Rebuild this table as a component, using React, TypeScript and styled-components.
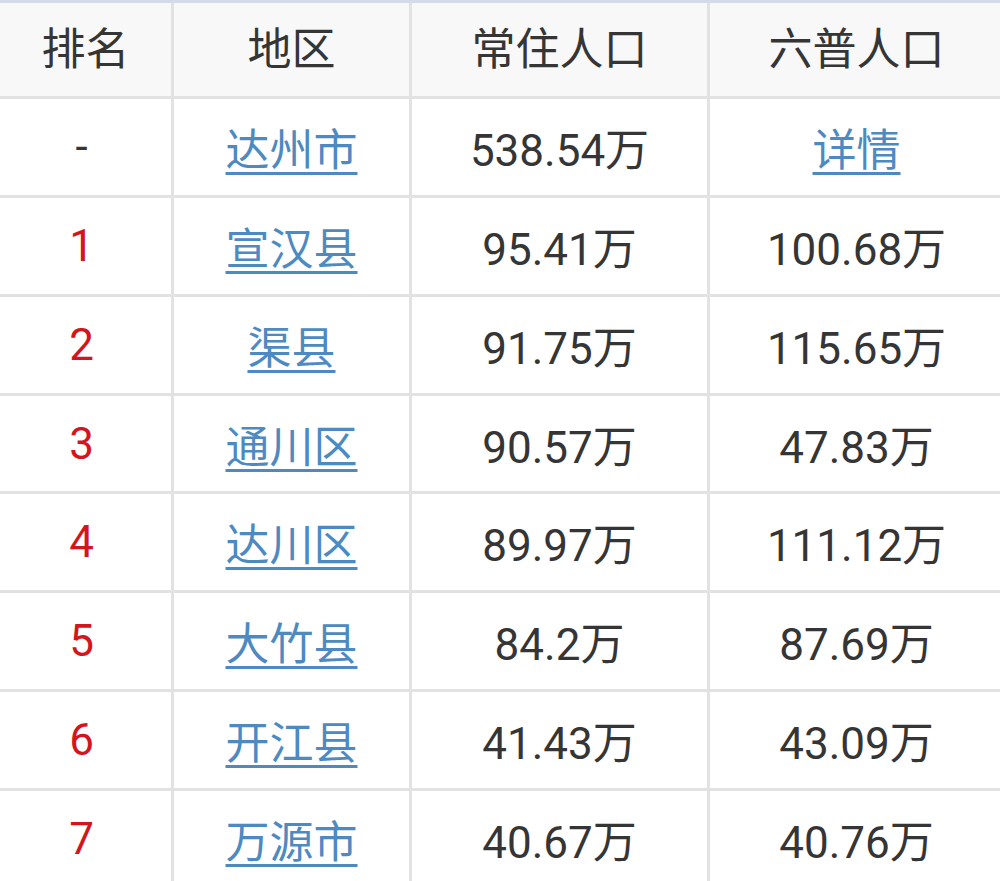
import React from 'react';
import styled, { createGlobalStyle } from 'styled-components';

type Row = { rank: string; area: string; resident: string; sixth: string; sixthLink?: boolean };

const rows: Row[] = [
	{ rank: '-', area: '达州市', resident: '538.54万', sixth: '详情', sixthLink: true },
	{ rank: '1', area: '宣汉县', resident: '95.41万', sixth: '100.68万' },
	{ rank: '2', area: '渠县', resident: '91.75万', sixth: '115.65万' },
	{ rank: '3', area: '通川区', resident: '90.57万', sixth: '47.83万' },
	{ rank: '4', area: '达川区', resident: '89.97万', sixth: '111.12万' },
	{ rank: '5', area: '大竹县', resident: '84.2万', sixth: '87.69万' },
	{ rank: '6', area: '开江县', resident: '41.43万', sixth: '43.09万' },
	{ rank: '7', area: '万源市', resident: '40.67万', sixth: '40.76万' },
];

const GlobalStyle = createGlobalStyle`
	html, body {
		margin: 0;
		padding: 0;
		background: #ffffff;
		overflow: hidden;
	}
	body {
		font-family: Roboto, "Noto Sans CJK SC", sans-serif;
	}
`;

const Page = styled.div`
	width: 1000px;
	height: 881px;
	overflow: hidden;
	background: #ffffff;
	border-top: 3px solid #d3dce6;
	box-sizing: border-box;
`;

const Grid = styled.div`
	display: grid;
	grid-template-columns: 171px 235px 295px 293px;
	grid-template-rows: 93px repeat(8, 95.86px);
	gap: 3px;
	background: #e2e2e2;
	width: 1000px;
`;

const HeadCell = styled.div`
	display: flex;
	align-items: center;
	justify-content: center;
	background: #f8f8f8;
	color: #353535;
	font-size: 44px;
	padding-bottom: 8px;
	box-sizing: border-box;
`;

const Cell = styled.div<{ $red?: boolean }>`
	display: flex;
	align-items: center;
	justify-content: center;
	background: #ffffff;
	color: ${p => (p.$red ? '#d3161e' : '#353535')};
	font-size: 44px;
`;

const RankCell = styled(Cell)`
	padding-right: 8px;
`;

const Link = styled.a`
	color: #4d8ac2;
	text-decoration: underline;
	text-decoration-thickness: 3px;
	text-underline-offset: 6px;
	cursor: pointer;
`;

export default function App() {
	return (
		<Page>
			<GlobalStyle />
			<Grid>
				<HeadCell>排名</HeadCell>
				<HeadCell>地区</HeadCell>
				<HeadCell>常住人口</HeadCell>
				<HeadCell>六普人口</HeadCell>
				{rows.map(r => (
					<React.Fragment key={r.area}>
						<RankCell $red={r.rank !== '-'}>{r.rank}</RankCell>
						<Cell><Link>{r.area}</Link></Cell>
						<Cell>{r.resident}</Cell>
						<Cell>{r.sixthLink ? <Link>{r.sixth}</Link> : r.sixth}</Cell>
					</React.Fragment>
				))}
			</Grid>
		</Page>
	);
}
